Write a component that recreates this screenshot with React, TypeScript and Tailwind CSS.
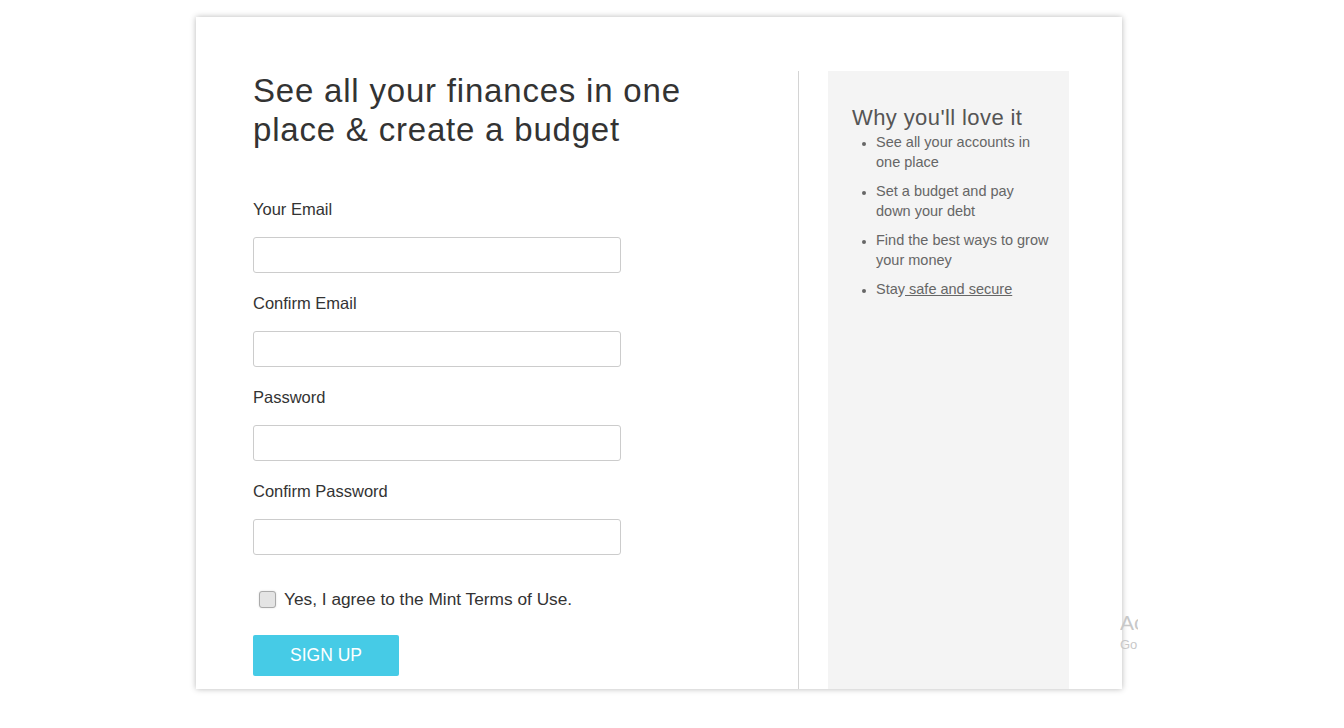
import React from "react";

const font = { fontFamily: '"Liberation Sans", Arial, sans-serif' };

function Field({ label }: { label: string }) {
  return (
    <div className="flex flex-col">
      <label className="text-[16.5px] leading-[20px] text-[#333]">{label}</label>
      <input className="mt-[18px] h-[36px] w-[368px] rounded-[3px] border border-[#cccccc] bg-white outline-none" />
    </div>
  );
}

export default function App() {
  return (
    <div className="relative h-[728px] w-[1344px] overflow-hidden bg-white" style={font}>
      <div className="ml-[196px] mt-[17px] flex h-[672px] w-[926px] bg-white pl-[57px] pt-[54px] shadow-[0_0_6px_rgba(0,0,0,0.28)]">
        <div className="flex w-[545px] flex-col">
          <h1 className="whitespace-nowrap text-[33px] leading-[39px] tracking-[0.8px] text-[#333]">
            See all your finances in one
            <br />
            place &amp; create a budget
          </h1>
          <div className="mt-[50px] flex flex-col gap-[20px]">
            <Field label="Your Email" />
            <Field label="Confirm Email" />
            <Field label="Password" />
            <Field label="Confirm Password" />
          </div>
          <div className="mt-[34px] flex items-center pl-[6px]">
            <div className="h-[17px] w-[17px] rounded-[3px] border border-[#aaaaaa] bg-[#e4e4e4] shadow-[0_0_2px_rgba(0,0,0,0.15)]" />
            <span className="ml-[8px] text-[17.3px] leading-[20px] text-[#333]">
              Yes, I agree to the Mint Terms of Use.
            </span>
          </div>
          <button className="mt-[26px] h-[41px] w-[146px] rounded-[2px] bg-[#46cbe6] text-[17.5px] text-white">
            SIGN UP
          </button>
        </div>
        <div className="w-px self-stretch bg-[#d4d4d4]" />
        <div className="ml-[29px] w-[241px] self-stretch bg-[#f4f4f4] pl-[24px] pr-[19px] pt-[35px]">
          <h2 className="whitespace-nowrap text-[22px] leading-[24px] tracking-[0.4px] text-[#555]">Why you'll love it</h2>
          <ul className="mt-[3px] list-disc pl-[24px] text-[14.5px] leading-[19.5px] text-[#666] marker:text-[12px]">
            <li className="mb-[10px]">See all your accounts in one place</li>
            <li className="mb-[10px]">Set a budget and pay down your debt</li>
            <li className="mb-[10px]">Find the best ways to grow your money</li>
            <li>
              Stay<span className="underline"> safe and secure</span>
            </li>
          </ul>
        </div>
      </div>
      <div className="absolute left-[1120px] top-[610px] w-[18px] overflow-hidden whitespace-nowrap text-[#c8c8c8]">
        <div className="text-[21px] leading-[26px]">Activate Windows</div>
        <div className="text-[13px] leading-[18px]">Go to Settings</div>
      </div>
    </div>
  );
}
